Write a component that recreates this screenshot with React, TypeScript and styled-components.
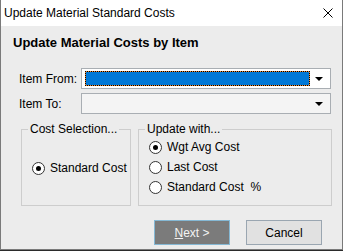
import React from 'react';
import styled, { createGlobalStyle } from 'styled-components';

const GlobalStyle = createGlobalStyle`
  html, body {
    margin: 0;
    padding: 0;
    background: #2b2b2b;
  }
  body {
    font-family: 'Liberation Sans', Arial, sans-serif;
    font-size: 12px;
    color: #000;
  }
`;

interface RadioProps {
  label: string;
  checked?: boolean;
}

const RadioOption: React.FunctionComponent<RadioProps> = ({ label, checked = false }) => (
  <RadioRow>
    <RadioCircle checked={checked} />
    <span>{label}</span>
  </RadioRow>
);

interface ComboProps {
  selected?: boolean;
  disabled?: boolean;
}

const Combo: React.FunctionComponent<ComboProps> = ({ selected = false, disabled = false }) => (
  <ComboBox disabled={disabled}>
    {selected ? <Highlight /> : <Spacer />}
    <Arrow />
  </ComboBox>
);

const App: React.FunctionComponent = () => (
  <>
    <GlobalStyle />
    <Window>
      <TitleBar>
        <TitleText>Update Material Standard Costs</TitleText>
        <CloseIcon viewBox="0 0 10 10">
          <path d="M0.5 0.5 L9.5 9.5 M9.5 0.5 L0.5 9.5" stroke="#000" strokeWidth="1" />
        </CloseIcon>
      </TitleBar>

      <Body>
        <Heading>Update Material Costs by Item</Heading>

        <FormGrid>
          <FieldLabel>Item From:</FieldLabel>
          <Combo selected />
          <FieldLabel>Item To:</FieldLabel>
          <Combo disabled />
        </FormGrid>

        <Groups>
          <GroupBox width={110} padTop={28}>
            <GroupTitle>Cost Selection...</GroupTitle>
            <RadioOption label="Standard Cost" checked />
          </GroupBox>

          <GroupBox width={194} padTop={7}>
            <GroupTitle>Update with...</GroupTitle>
            <RadioOption label="Wgt Avg Cost" checked />
            <RadioOption label="Last Cost" />
            <RadioOption label="Standard Cost  %" />
          </GroupBox>
        </Groups>

        <ButtonRow>
          <DialogButton primary>
            <u>N</u>ext &gt;
          </DialogButton>
          <DialogButton>Cancel</DialogButton>
        </ButtonRow>
      </Body>
    </Window>
  </>
);

const Window = styled.div`
  width: 343px;
  height: 250px;
  box-sizing: border-box;
  border: 1px solid #7a7a7a;
  border-top: none;
  background: #ececec;
  display: flex;
  flex-direction: column;
  overflow: hidden;
`;

const TitleBar = styled.div`
  height: 26px;
  background: #fff;
  display: flex;
  align-items: center;
  justify-content: space-between;
  padding: 0 9px 0 3px;
  flex-shrink: 0;
`;

const TitleText = styled.span`
  font-size: 12px;
  line-height: 16px;
  margin-top: -1px;
`;

const CloseIcon = styled.svg`
  width: 10px;
  height: 10px;
`;

const Body = styled.div`
  flex: 1;
  display: flex;
  flex-direction: column;
  padding: 9px 11px 0 12px;
`;

const Heading = styled.h1`
  margin: 0;
  font-size: 13px;
  font-weight: bold;
  line-height: 16px;
`;

const FormGrid = styled.div`
  display: grid;
  grid-template-columns: 62px 250px;
  row-gap: 4px;
  align-items: center;
  margin: 17px 0 0 6px;
`;

const FieldLabel = styled.span`
  line-height: 16px;
`;

const ComboBox = styled.div<{ disabled: boolean }>`
  height: 21px;
  box-sizing: border-box;
  border: 1px solid #a9aeb3;
  background: ${({ disabled }) => (disabled ? '#f4f4f4' : '#fff')};
  display: flex;
  align-items: center;
  padding: 2px 6px 2px 3px;
  gap: 5px;
`;

const Highlight = styled.span`
  flex: 1;
  height: 15px;
  box-sizing: border-box;
  border: 1px dotted #000;
  background: linear-gradient(#0078d7, #0078d7) padding-box, linear-gradient(#f08a30, #f08a30) border-box;
`;

const Spacer = styled.span`
  flex: 1;
`;

const Arrow = styled.span`
  width: 0;
  height: 0;
  border-left: 4px solid transparent;
  border-right: 4px solid transparent;
  border-top: 4px solid #000;
  margin-right: 1px;
`;

const Groups = styled.div`
  display: flex;
  gap: 7px;
  margin: 15px 0 0 8px;
`;

const GroupBox = styled.div<{ width: number; padTop: number }>`
  position: relative;
  flex-shrink: 0;
  width: ${({ width }) => width}px;
  height: 77px;
  box-sizing: border-box;
  padding: ${({ padTop }) => padTop}px 6px 0 10px;
  border: 1px solid #cdcdcd;
`;

const GroupTitle = styled.span`
  position: absolute;
  top: -8px;
  left: 6px;
  padding: 0 2px;
  line-height: 15px;
  background: #ececec;
`;

const RadioRow = styled.div`
  height: 20px;
  display: flex;
  align-items: center;
  gap: 5px;
  white-space: pre;
`;

const RadioCircle = styled.span<{ checked: boolean }>`
  width: 13px;
  height: 13px;
  box-sizing: border-box;
  border: 1px solid #333;
  border-radius: 50%;
  background: #fff;
  display: flex;
  align-items: center;
  justify-content: center;
  flex-shrink: 0;

  &::after {
    content: '';
    width: 5px;
    height: 5px;
    border-radius: 50%;
    background: ${({ checked }) => (checked ? '#000' : 'transparent')};
  }
`;

const ButtonRow = styled.div`
  display: flex;
  justify-content: flex-end;
  gap: 16px;
  margin: 14px 9px 0 0;
`;

const DialogButton = styled.button<{ primary?: boolean }>`
  width: 76px;
  height: 25px;
  box-sizing: border-box;
  font-family: inherit;
  font-size: 12px;
  padding: 0;
  border: 1px solid ${({ primary }) => (primary ? '#85b8d4' : '#9aa6b1')};
  background: ${({ primary }) => (primary ? '#7b7b7b' : '#e1e1e1')};
  color: ${({ primary }) => (primary ? '#f4f4f4' : '#000')};
`;

export default App;
